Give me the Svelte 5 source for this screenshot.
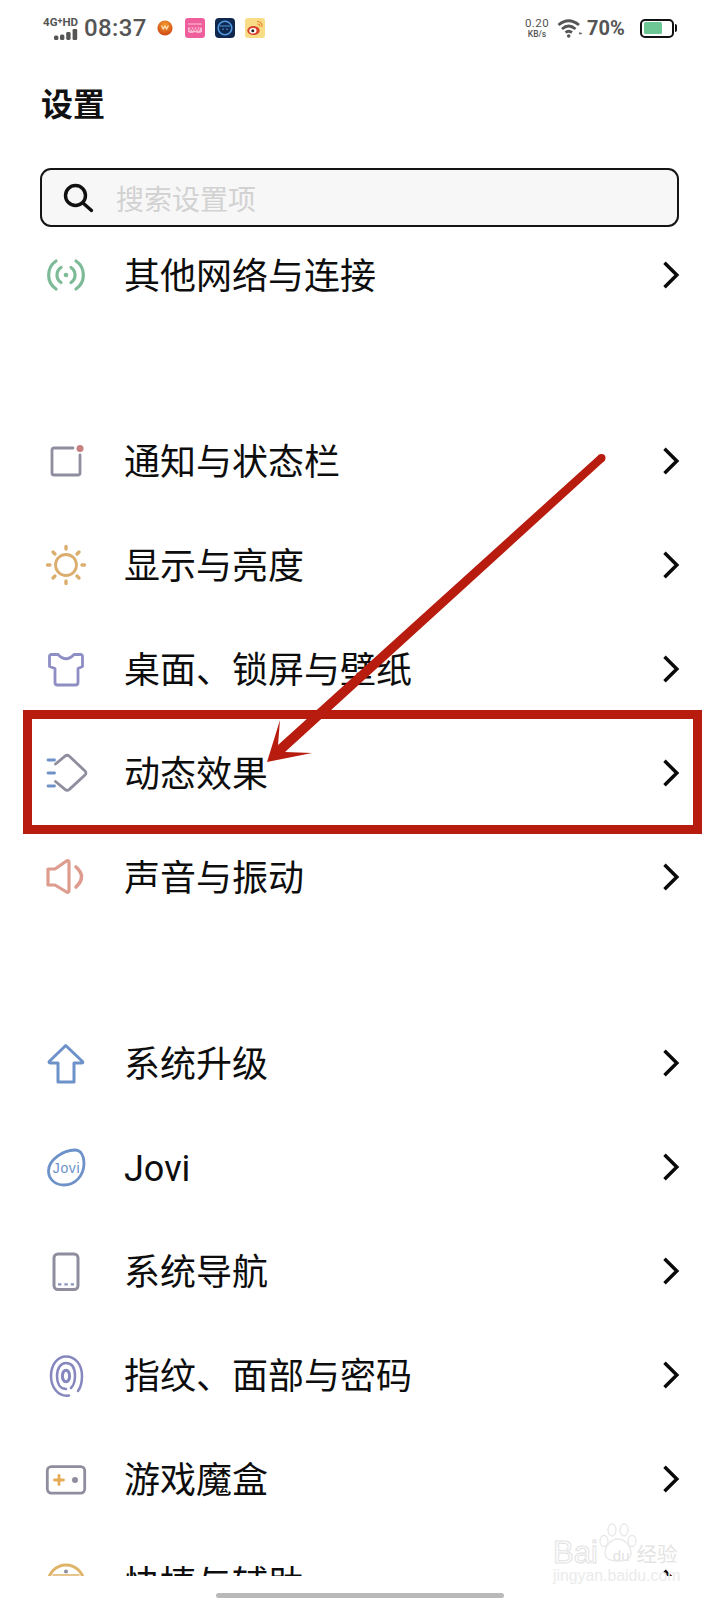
<script>
  const g1 = ['通知与状态栏', '显示与亮度', '桌面、锁屏与壁纸', '动态效果', '声音与振动'];
</script>

{#snippet row(label, icon)}
  <div class="row">
    <svg class="ic" viewBox="0 0 44 44" fill="none" stroke-linecap="round" stroke-linejoin="round">{@render icon()}</svg>
    <span class="label">{label}</span>
    <svg class="chev" viewBox="0 0 18 28" fill="none"><path d="M2.5 1.8 L14.8 14 L2.5 26.2" stroke="#0a0a0a" stroke-width="3.5" stroke-linejoin="miter"/></svg>
  </div>
{/snippet}

{#snippet net()}
  <g stroke="#7dbb98" stroke-width="3.2">
    <path d="M12 8A17 17 0 0 0 12 36M32 8A17 17 0 0 1 32 36"/>
    <path d="M17 14.5A9 9 0 0 0 17 29.5M27 14.5A9 9 0 0 1 27 29.5"/>
  </g>
  <circle cx="22" cy="22" r="2.3" fill="#7dbb98"/>
{/snippet}
{#snippet notice()}
  <path d="M29 9H10a2 2 0 0 0-2 2V34a2 2 0 0 0 2 2H34a2 2 0 0 0 2-2V16" stroke="#8e8e9e" stroke-width="2.8"/>
  <circle cx="36" cy="9.5" r="3.5" fill="#c87f7f"/>
{/snippet}
{#snippet sun()}
  <g stroke="#dcae6e">
    <circle cx="22" cy="22" r="10.5" stroke-width="2.8"/>
    <path stroke-width="3.4" d="M22 3.5V6M22 38V40.5M3.5 22H6M38 22H40.5M9 9L11 11M33 33L35 35M35 9L33 11M11 33L9 35"/>
  </g>
{/snippet}
{#snippet shirt()}
  <path d="M14 7.5H7.5Q5.5 7.5 5.5 9.5V19.5L11 21.5V35.5Q11 38 13.5 38H31.5Q34 38 34 35.5V21.5L38.5 19.5V9.5Q38.5 7.5 36.5 7.5H30Q22 16 14 7.5Z" stroke="#8e8ec4" stroke-width="2.8"/>
{/snippet}
{#snippet motion()}
  <path d="M11.5 13L21 5.2a3.4 3.4 0 0 1 4.4 0L41 20a2.6 2.6 0 0 1 0 4L25.4 38.4a3.4 3.4 0 0 1-4.4 0L11.5 30.5" stroke="#8e8e9e" stroke-width="2.8"/>
  <path d="M4 9H10.5M4 22H10.5M4 35H10.5" stroke="#6f92c9" stroke-width="2.8"/>
{/snippet}
{#snippet speaker()}
  <path d="M4 14H11L22.5 6Q25 5 25 7.5V35.5Q25 38 22.5 37L11 30H4Z" stroke="#dd9c8e" stroke-width="3.2"/>
  <path d="M32 12Q43 21.5 32 32" stroke="#dd9c8e" stroke-width="3.6"/>
{/snippet}
{#snippet up()}
  <path d="M21.7 4.5L5.2 20.5Q4.5 22 6.5 22H14V41H30V22H37.5Q39.5 22 38.5 20.5Z" stroke="#6d92c9" stroke-width="3"/>
{/snippet}
{#snippet jovi()}
  <path d="M31 5C37 5 40 11 40 18C40 31 31 40 20 40C10 40 4.5 33 4.5 26C4.5 15 19 5 31 5Z" stroke="#6d92c9" stroke-width="2.8"/>
  <text x="22.5" y="27.5" text-anchor="middle" class="jt">Jovi</text>
{/snippet}
{#snippet phone()}
  <rect x="10" y="5" width="24" height="35.5" rx="4" stroke="#8e8e9e" stroke-width="3"/>
  <path d="M14 35.3H30" stroke="#8a96b8" stroke-width="2.2" stroke-dasharray="3.4 3" stroke-linecap="butt"/>
{/snippet}
{#snippet finger()}
  <g stroke="#8787c0" stroke-width="2.5">
    <path d="M25 42.5C14 44 7 34 7 23C7 11 14 3.5 22 3.5C31 3.5 38 11 38 23C38 29 37 34 34 38"/>
    <path d="M22 36C15 36 13 29 13 23C13 15 17 10 22 10C28 10 31 15 31 23C31 29 29 33 27 35"/>
    <ellipse cx="22" cy="23" rx="3.6" ry="5.8" stroke-width="3"/>
  </g>
{/snippet}
{#snippet game()}
  <rect x="3.3" y="9.6" width="37.4" height="26.5" rx="4" stroke="#8e8e9e" stroke-width="2.8"/>
  <path d="M10.5 23H19.5M15 18.5V27.5" stroke="#e6ac55" stroke-width="2.8"/>
  <circle cx="31" cy="23" r="3" fill="#8e8e9e"/>
{/snippet}
{#snippet quick()}
  <circle cx="22" cy="22" r="18" stroke="#e0b468" stroke-width="3"/>
  <circle cx="22" cy="10.5" r="2" fill="#8e8e9e"/>
  <path d="M9 14H35" stroke="#e0b468" stroke-width="1.5"/>
{/snippet}

<div class="screen">
  <header class="status">
    <div class="net">
      <span class="nt">4G<sup>+</sup>HD</span>
      <svg width="24" height="11" viewBox="0 0 24 11" fill="#555"><rect x="0" y="6.5" width="4.4" height="4.5" rx="1.6"/><rect x="6" y="5.5" width="4.4" height="5.5" rx="1.6"/><rect x="12.2" y="3" width="4.4" height="8" rx="1.4"/><rect x="18.6" y="0" width="4.6" height="11" rx="1.2"/></svg>
    </div>
    <span class="time">08:37</span>
    <div class="apps">
      <svg width="20" height="20" viewBox="0 0 20 20"><defs><radialGradient id="o" cx=".5" cy=".3" r=".8"><stop offset="0" stop-color="#f39a2e"/><stop offset="1" stop-color="#c93c12"/></radialGradient></defs><circle cx="10" cy="10" r="7.6" fill="url(#o)"/><path d="M6.5 7.5L8.2 11L10 8L11.6 11L13.5 7.5" stroke="#ffe2b8" stroke-width="1.3" fill="none"/></svg>
      <svg width="20" height="20" viewBox="0 0 20 20"><rect width="20" height="20" rx="3" fill="#ef5f9b"/><path d="M3 9.5H17V14Q13.5 16 10 14Q6.5 16 3 14Z" fill="#f9bcd3"/><path d="M4.5 13L6 9.5L7.5 13L9 9.5L10.5 13L12 9.5L13.5 13L15 9.5" stroke="#ef5f9b" stroke-width="1" fill="none"/><path d="M3 6H17" stroke="#f9a9c8" stroke-width="1.4"/></svg>
      <svg width="20" height="20" viewBox="0 0 20 20"><rect width="20" height="20" rx="4" fill="#10284f"/><circle cx="10" cy="10" r="6.8" fill="none" stroke="#4f9ae0" stroke-width="1.6"/><path d="M5 8H15M8 10.5V12M12 10.5V12" stroke="#4f9ae0" stroke-width="1.2"/></svg>
      <svg width="20" height="20" viewBox="0 0 20 20"><rect width="20" height="20" rx="3" fill="#f9dc86"/><ellipse cx="8.5" cy="12.5" rx="6.2" ry="4.6" fill="#d9432c"/><ellipse cx="8" cy="12.8" rx="3.6" ry="2.8" fill="#fff"/><circle cx="7.8" cy="12.8" r="1.5" fill="#222"/><path d="M12 3.5Q17.5 3.5 17 9M12.5 6Q15 6 14.8 8.5" stroke="#e8842c" stroke-width="1.1" fill="none"/></svg>
    </div>
    <div class="right">
      <div class="speed"><span class="s1">0.20</span><span class="s2">KB/s</span></div>
      <svg width="26" height="20" viewBox="0 0 26 20" fill="none" stroke="#555" stroke-width="2.8"><path d="M1.5 7Q11.5 -1.5 22 7M5 11Q11.5 5 18.5 11M8.5 14.5Q11.5 12 15 14.5"/><circle cx="11.7" cy="18" r="1.8" fill="#555" stroke="none"/><path d="M22.5 14.5L25 15.5L22.5 16.2Z" fill="#555" stroke-width="0.5"/></svg>
      <span class="pct">70%</span>
      <div class="bat"><div class="fill"></div></div>
    </div>
  </header>

  <h1>设置</h1>

  <div class="search">
    <svg width="32" height="32" viewBox="0 0 32 32" fill="none" stroke="#111" stroke-width="3.4"><circle cx="12.5" cy="13.5" r="10"/><path d="M20 21L28.5 28.5" stroke-linecap="round"/></svg>
    <span>搜索设置项</span>
  </div>

  <main class="list">
    <section>{@render row('其他网络与连接', net)}</section>
    <section>
      {@render row(g1[0], notice)}
      {@render row(g1[1], sun)}
      {@render row(g1[2], shirt)}
      {@render row(g1[3], motion)}
      {@render row(g1[4], speaker)}
    </section>
    <section>
      {@render row('系统升级', up)}
      {@render row('Jovi', jovi)}
      {@render row('系统导航', phone)}
      {@render row('指纹、面部与密码', finger)}
      {@render row('游戏魔盒', game)}
      {@render row('快捷与辅助', quick)}
    </section>
  </main>

  <div class="homebar"></div>

  <div class="box"></div>
  <svg class="arrow" viewBox="0 0 720 1600" fill="#b71c0e">
    <path d="M267 762L280 720L278 745L598.7 455L604.3 461L285 752L312 753Z"/>
    <circle cx="601.5" cy="458" r="4"/>
  </svg>

  <div class="mark">
    <svg class="paw" width="40" height="40" viewBox="0 0 40 40" fill="none" stroke="#e8e8e8" stroke-width="1.3"><ellipse cx="6" cy="19" rx="4" ry="5.5"/><ellipse cx="14" cy="8" rx="4" ry="6"/><ellipse cx="26" cy="8" rx="4" ry="6"/><ellipse cx="34" cy="19" rx="4" ry="5.5"/><path d="M20 17C13 17 7 24 7 31C7 37 13 39 20 39C27 39 33 37 33 31C33 24 27 17 20 17Z"/></svg>
    <div class="m1"><span class="bai">Bai</span><span class="du">du</span><span class="jy">经验</span></div>
    <div class="m2">jingyan.baidu.com</div>
  </div>
</div>

<style>
  :global(body) { margin: 0; background: #fff; }
  .screen {
    position: relative;
    width: 720px;
    height: 1600px;
    overflow: hidden;
    background: #fff;
    font-family: "Noto Sans CJK SC", "Noto Sans", sans-serif;
    color: #0d0d0d;
  }
  .status {
    display: flex;
    align-items: center;
    height: 56px;
    padding: 0 46px 0 42px;
    color: #555;
    font-family: Roboto, "Liberation Sans", sans-serif;
  }
  .net { display: flex; flex-direction: column; align-items: flex-end; width: 36px; line-height: 1; }
  .nt { font-size: 11.5px; font-weight: 700; line-height: 11px; white-space: nowrap; }
  .nt sup { font-size: 9px; line-height: 0; vertical-align: 2px; }
  .net svg { margin-top: 1px; }
  .time { margin-left: 6px; font-size: 24px; font-weight: 500; letter-spacing: 0.4px; }
  .apps { display: flex; gap: 10px; margin-left: 8px; }
  .apps svg { display: block; }
  .right { display: flex; align-items: center; margin-left: auto; }
  .speed { display: flex; flex-direction: column; align-items: center; width: 28px; line-height: 1; }
  .s1 { font-size: 11.5px; letter-spacing: 0.4px; }
  .s2 { font-size: 8.5px; font-weight: 500; }
  .right > svg { margin-left: 6px; }
  .pct { margin-left: 4px; font-size: 20px; font-weight: 700; width: 41px; }
  .bat {
    position: relative;
    box-sizing: border-box;
    width: 34px;
    height: 19px;
    margin-left: 12px;
    border: 2.2px solid #111;
    border-radius: 5px;
    padding: 1.8px;
  }
  .bat::after {
    content: "";
    position: absolute;
    right: -5px;
    top: 3.5px;
    width: 2.5px;
    height: 8px;
    background: #111;
    border-radius: 0 2px 2px 0;
  }
  .fill { width: 68%; height: 100%; background: #6cc795; border-radius: 1.5px; }
  h1 {
    margin: 23px 0 0 41px;
    font-size: 32px;
    line-height: 46px;
    font-weight: 700;
    color: #111;
  }
  .search {
    box-sizing: border-box;
    display: flex;
    align-items: center;
    width: 639px;
    height: 59px;
    margin: 43px 0 0 40px;
    padding: 0 0 0 21px;
    border: 2px solid #151515;
    border-radius: 11px;
    background: #f7f7f7;
  }
  .search svg { flex: none; }
  .search span { margin-left: 21px; font-size: 28px; color: #d2d2d2; }
  .list {
    height: 1353px;
    margin-top: -4px;
    overflow: hidden;
    position: relative;
  }
  section + section { margin-top: 82px; }
  .row {
    display: flex;
    align-items: center;
    height: 104px;
    padding-left: 44px;
  }
  .ic { flex: none; width: 44px; height: 44px; overflow: visible; }
  .label {
    margin-left: 36px;
    padding-top: 4px;
    font-family: Roboto, "Noto Sans CJK SC", sans-serif;
    font-size: 36px;
    line-height: 1;
    flex: 1;
  }
  .chev { flex: none; width: 18px; height: 28px; margin-right: 40px; }
  .jt { font: 400 14px "Liberation Sans", sans-serif; letter-spacing: 0.6px; fill: #6d92c9; }
  .homebar {
    position: absolute;
    left: 216px;
    top: 1593px;
    width: 288px;
    height: 5px;
    border-radius: 3px;
    background: #b9b9b9;
  }
  .box {
    position: absolute;
    left: 23px;
    top: 710px;
    width: 679px;
    height: 124px;
    box-sizing: border-box;
    border: 9px solid #b71c0e;
  }
  .arrow { position: absolute; inset: 0; width: 720px; height: 1600px; pointer-events: none; }
  .mark {
    position: absolute;
    left: 553px;
    top: 1522px;
    width: 130px;
    height: 62px;
    color: #e6e6e6;
    font-family: "Liberation Sans", "Noto Sans CJK SC", sans-serif;
  }
  .paw { position: absolute; left: 45px; top: 0; }
  .m1 { display: flex; align-items: center; margin-top: 17px; height: 28px; white-space: nowrap; }
  .m1 span { flex: none; }
  .bai { font-size: 31px; line-height: 28px; color: transparent; -webkit-text-stroke: 1px #e2e2e2; }
  .du { margin: 6px 0 0 15px; font-size: 15px; line-height: 20px; color: #e2e2e2; }
  .jy { margin-left: 7px; font-size: 20.5px; line-height: 28px; color: #e4e4e4; font-family: "Noto Sans CJK SC", sans-serif; }
  .m2 { margin-top: 1px; font-size: 15.8px; line-height: 16px; white-space: nowrap; color: #ebebeb; }
</style>
